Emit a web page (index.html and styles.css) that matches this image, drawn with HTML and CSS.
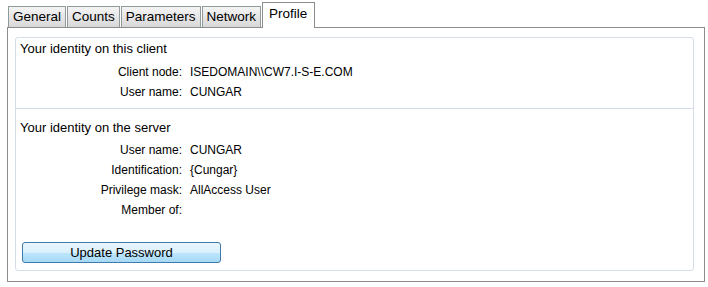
FILE: index.html
```html
<!DOCTYPE html>
<html lang="en">
<head>
    <meta charset="UTF-8">
    <title>Profile</title>
    <link rel="stylesheet" href="styles.css">
</head>
<body>
    <div class="tabs">
        <div class="tab">General</div>
        <div class="tab">Counts</div>
        <div class="tab">Parameters</div>
        <div class="tab">Network</div>
        <div class="tab active">Profile</div>
    </div>

    <div class="panel">
        <div class="group">
            <div class="section">
                <div class="heading">Your identity on this client</div>
                <div class="row"><span class="label">Client node:</span><span class="value">ISEDOMAIN\\CW7.I-S-E.COM</span></div>
                <div class="row"><span class="label">User name:</span><span class="value">CUNGAR</span></div>
            </div>
            <div class="section server">
                <div class="heading">Your identity on the server</div>
                <div class="row"><span class="label">User name:</span><span class="value">CUNGAR</span></div>
                <div class="row"><span class="label">Identification:</span><span class="value">{Cungar}</span></div>
                <div class="row"><span class="label">Privilege mask:</span><span class="value">AllAccess User</span></div>
                <div class="row"><span class="label">Member of:</span><span class="value"></span></div>
                <button class="btn">Update Password</button>
            </div>
        </div>
    </div>
</body>
</html>
```

FILE: styles.css
```css
body {
    margin: 0;
    padding: 2px 4px 0 7px;
    font-family: "Liberation Sans", Arial, sans-serif;
    font-size: 12px;
    color: #000;
    background: #fff;
    width: 698px;
}
.tabs {
    display: flex;
    align-items: flex-end;
    height: 25px;
    padding-left: 1px;
}
.tab {
    height: 20px;
    line-height: 20px;
    padding: 0 4px;
    border: 1px solid #919b9c;
    border-bottom: none;
    background: linear-gradient(#f4f4f4, #d8d8d8);
    margin-right: 1px;
    font-size: 13.5px;
}
.tab.active {
    height: 25px;
    line-height: 22px;
    background: #fff;
    padding: 0 7px 0 6px;
    border-color: #8c8c8c;
    position: relative;
    top: 1px;
}
.panel {
    border: 1px solid #8c8c8c;
    padding: 9px 10px 10px 7px;
    box-sizing: border-box;
    height: 255px;
}
.group {
    border: 1px solid #d5dde8;
    border-radius: 3px;
    height: 100%;
    box-sizing: border-box;
}
.section {
    padding: 1px 0 0 4px;
}
.section.server {
    border-top: 1px solid #d5dde8;
    margin-top: 5px;
    padding-top: 9px;
}
.heading {
    height: 20px;
    line-height: 20px;
    font-size: 13px;
    margin-bottom: 4px;
}
.row {
    display: flex;
    height: 20px;
    line-height: 18px;
}
.label {
    width: 162px;
    text-align: right;
    margin-right: 8px;
}
.value {
    flex: 1;
}
.section.server .heading {
    margin-bottom: 3px;
}
.btn {
    display: block;
    margin: 21px 0 0 2px;
    width: 199px;
    height: 21px;
    font-family: inherit;
    font-size: 13px;
    border: 1px solid #3d7bad;
    border-radius: 3px;
    background: linear-gradient(#eaf6fd 0%, #d9f0fc 50%, #bee6fd 51%, #a7d9f5 100%);
    padding: 0;
    color: #000;
}
```
